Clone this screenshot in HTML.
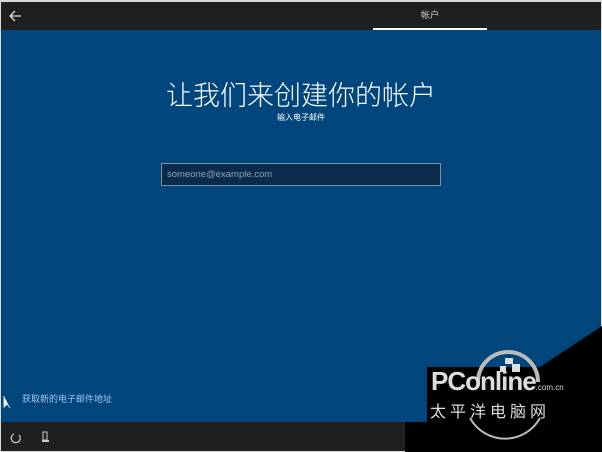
<!DOCTYPE html>
<html><head><meta charset="utf-8"><style>
*{margin:0;padding:0;box-sizing:border-box}
body{width:602px;height:452px;overflow:hidden;background:#d8d8d8;font-family:"Liberation Sans","Noto Sans CJK SC",sans-serif;position:relative}
.top{position:absolute;left:1px;top:2px;width:600px;height:28px;background:#1f1f1f}
.blue{position:absolute;left:1px;top:30px;width:600px;height:392px;background:#00467c}
.bot{position:absolute;left:1px;top:422px;width:600px;height:29px;background:#1f1f1f}
.t{position:absolute;color:#fff;white-space:nowrap}
</style></head><body>
<div class="top"></div>
<div class="blue"></div>
<div class="bot"></div>
<svg style="position:absolute;left:0;top:0" width="602" height="452">
<path d="M10 16 L21 16 M10 16 L15 11 M10 16 L15 21" stroke="#ddd" stroke-width="1.3" fill="none"/>
<rect x="373" y="28" width="114" height="2" fill="#fff"/>
<polygon points="602,326 602,452 405,452 405,422 427,422 427,367 540,367" fill="#000"/>
<rect x="161.5" y="163.5" width="279" height="22" fill="#0b2b4d" stroke="#7f8fa0"/>
<path d="M19 435 A4.5 4.5 0 1 1 14 434" stroke="#ccc" stroke-width="1.2" fill="none"/>
<rect x="43" y="432" width="4" height="8" stroke="#ccc" fill="none"/><rect x="42" y="440" width="7" height="2" fill="#ccc"/>
<path d="M4 396 L4 407 L7 404 L10 408" stroke="#ddd" fill="#fff"/>
<path d="M478 382 A30 30 0 0 1 538 382" stroke="#bbb" stroke-width="4" fill="none"/>
<path d="M470 418 A40 40 0 0 0 540 418" stroke="#bbb" stroke-width="2" fill="none"/>
<rect x="505" y="358" width="8" height="6" fill="#ddd"/><rect x="512" y="364" width="8" height="8" fill="#ddd"/><rect x="500" y="366" width="6" height="6" fill="#ddd"/>
</svg>
<div class="t" style="left:0;width:860px;text-align:center;top:8px;font-size:9px;color:#ccc">帐户</div>
<div class="t" style="left:0;width:602px;text-align:center;top:74px;font-size:27px;font-weight:300">让我们来创建你的帐户</div>
<div class="t" style="left:0;width:602px;text-align:center;top:112px;font-size:8px">输入电子邮件</div>
<div class="t" style="left:167px;top:169px;font-size:9.5px;color:#8ea1b5">someone@example.com</div>
<div class="t" style="left:22px;top:392px;font-size:9px;color:#9fc7ee">获取新的电子邮件地址</div>
<div class="t" style="left:431px;top:366px;font-size:26px;font-weight:bold;color:#ddd;letter-spacing:-1px">PConline<span style="font-size:8px;font-weight:normal;letter-spacing:0">.com.cn</span></div>
<div class="t" style="left:430px;top:398px;font-size:16px;color:#ddd;letter-spacing:4px">太平洋电脑网</div>
</body></html>
